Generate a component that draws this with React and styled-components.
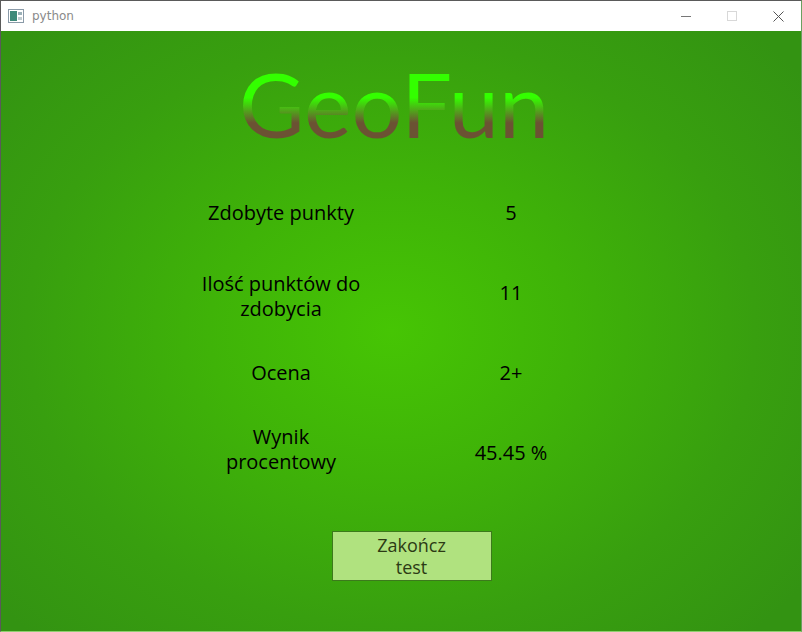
import React from "react";
import styled, { createGlobalStyle } from "styled-components";

const Global = createGlobalStyle`
  html, body {
    margin: 0;
    padding: 0;
    background: #ffffff;
  }
`;

const Window = styled.div`
  width: 802px;
  height: 632px;
  box-sizing: border-box;
  border: 1px solid #5a5a5a;
  border-bottom-color: #8fcf70;
  border-right-color: #6aa060;
  display: flex;
  flex-direction: column;
  font-family: "Open Sans", "DejaVu Sans", sans-serif;
`;

const TitleBar = styled.div`
  height: 30px;
  background: #ffffff;
  display: flex;
  align-items: center;
  padding-left: 7px;
  flex-shrink: 0;
`;

const AppName = styled.span`
  margin-left: 8px;
  font-size: 12px;
  color: #8a8a8a;
  font-family: "DejaVu Sans", sans-serif;
`;

const Controls = styled.div`
  margin-left: auto;
  display: flex;
`;

const Ctrl = styled.div`
  width: 46px;
  height: 30px;
  display: flex;
  align-items: center;
  justify-content: center;
`;

const Content = styled.div`
  flex: 1;
  display: flex;
  flex-direction: column;
  align-items: center;
  background: radial-gradient(
    ellipse 520px 420px at 390px 300px,
    #46c504 0%,
    #3fb308 35%,
    #389f0f 70%,
    #339312 100%
  );
`;

const Title = styled.h1`
  margin: 17px 0 0 -14px;
  font-family: Lato, "Open Sans", sans-serif;
  font-size: 90px;
  font-weight: 400;
  line-height: 110px;
  letter-spacing: 0;
  background: linear-gradient(
    to bottom,
    #33ff00 0%,
    #33ff00 45%,
    #6b5233 68%,
    #6b5233 100%
  );
  -webkit-background-clip: text;
  background-clip: text;
  color: transparent;
`;

const Table = styled.div`
  margin: 14px 0 0 -10px;
  display: flex;
  flex-direction: column;
`;

const Row = styled.div`
  height: 80px;
  display: grid;
  grid-template-columns: 200px 200px;
  column-gap: 30px;
  align-items: center;
`;

const Cell = styled.div`
  text-align: center;
  font-size: 20px;
  line-height: 25px;
  color: #000000;
  transform: translateY(${(p) => p.$shift || 0}px);
`;

const Button = styled.button`
  margin: 39px 0 0 21px;
  width: 160px;
  height: 50px;
  box-sizing: border-box;
  background: #b0e27f;
  border: 1px solid #3c7a1c;
  color: #2c3a14;
  font-family: "Open Sans", "DejaVu Sans", sans-serif;
  font-size: 18px;
  line-height: 22px;
  padding: 0;
`;

const rows = [
  { label: ["Zdobyte punkty"], value: "5", shift: 0 },
  { label: ["Ilość punktów do", "zdobycia"], value: "11", shift: 4 },
  { label: ["Ocena"], value: "2+", shift: 0 },
  { label: ["Wynik", "procentowy"], value: "45.45 %", shift: -3 },
];

const AppIcon = () => (
  <svg width="16" height="14" viewBox="0 0 16 14">
    <rect x="0.5" y="0.5" width="15" height="13" fill="#ffffff" stroke="#8a9aa8" />
    <rect x="2" y="2" width="7" height="10" fill="#3f8a7a" />
    <rect x="10" y="3" width="4" height="3" fill="#9ab0b8" />
    <rect x="10" y="8" width="4" height="3" fill="#c0ccd0" />
  </svg>
);

const App = () => {
  return (
    <>
      <Global />
      <Window>
        <TitleBar>
          <AppIcon />
          <AppName>python</AppName>
          <Controls>
            <Ctrl>
              <svg width="10" height="10" viewBox="0 0 10 10">
                <line x1="0" y1="5.5" x2="10" y2="5.5" stroke="#777" strokeWidth="1" />
              </svg>
            </Ctrl>
            <Ctrl>
              <svg width="10" height="10" viewBox="0 0 10 10">
                <rect x="0.5" y="0.5" width="9" height="9" fill="none" stroke="#d8d8d8" />
              </svg>
            </Ctrl>
            <Ctrl>
              <svg width="11" height="11" viewBox="0 0 11 11">
                <path d="M0.5 0.5 L10.5 10.5 M10.5 0.5 L0.5 10.5" stroke="#555" strokeWidth="1" />
              </svg>
            </Ctrl>
          </Controls>
        </TitleBar>
        <Content>
          <Title>GeoFun</Title>
          <Table>
            {rows.map((r) => (
              <Row key={r.value}>
                <Cell $shift={r.shift}>
                  {r.label.map((l, i) => (
                    <React.Fragment key={l}>
                      {i > 0 && <br />}
                      {l}
                    </React.Fragment>
                  ))}
                </Cell>
                <Cell>{r.value}</Cell>
              </Row>
            ))}
          </Table>
          <Button>
            Zakończ
            <br />
            test
          </Button>
        </Content>
      </Window>
    </>
  );
};

export default App;
